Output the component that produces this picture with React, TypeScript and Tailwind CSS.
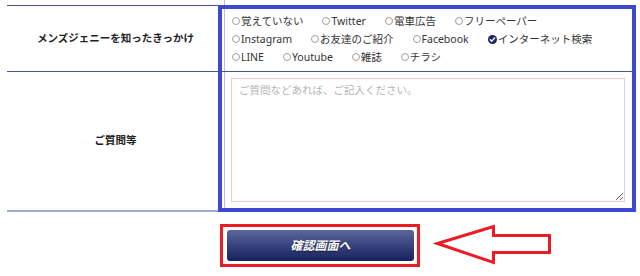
const options = [
  ["覚えていない", "Twitter", "電車広告", "フリーペーパー"],
  ["Instagram", "お友達のご紹介", "Facebook", "インターネット検索"],
  ["LINE", "Youtube", "雑誌", "チラシ"],
];

const checked = "インターネット検索";

function Radio({ on }: { on: boolean }) {
  if (on) {
    return (
      <svg className="w-[9px] h-[9px] mr-[1px] shrink-0" viewBox="0 0 10 10">
        <circle cx="5" cy="5" r="5" fill="#1d2766" />
        <path d="M2.6 5.2l1.6 1.6 3.2-3.4" fill="none" stroke="#fff" strokeWidth={1.6} strokeLinecap="round" strokeLinejoin="round" />
      </svg>
    );
  }
  return <span className="w-[8px] h-[8px] mr-[1px] rounded-full border border-[#a0a0a0] shrink-0" />;
}

export default function App() {
  return (
    <div
      className="relative w-[640px] h-[276px] bg-white overflow-hidden text-[#333]"
      style={{ fontFamily: "'Noto Sans', 'Noto Sans CJK JP', sans-serif" }}
    >
      {/* Table */}
      <div className="ml-[7px] w-[625px]">
        <div className="flex h-[5px]">
          <div className="w-[218px] border-r border-[#b9bdda]" />
        </div>

        {/* Row 1 */}
        <div className="flex h-[67px] border-t border-b border-[#4a5490]">
          <div className="w-[218px] border-r border-[#b9bdda] flex items-center justify-center text-[10.5px] font-bold text-[#222]">
            メンズジェニーを知ったきっかけ
          </div>
          <div className="flex-1 pl-[7px] pt-[6px] text-[10.5px] leading-[18px]">
            {options.map((row, i) => (
              <div key={i} className="flex items-center gap-x-[19px] h-[18px]">
                {row.map((o) => (
                  <label key={o} className="flex items-center whitespace-nowrap">
                    <Radio on={o === checked} />
                    {o}
                  </label>
                ))}
              </div>
            ))}
          </div>
        </div>

        {/* Row 2 */}
        <div className="flex h-[140px] border-b-2 border-[#a3aad1]">
          <div className="w-[218px] border-r border-[#b9bdda] flex items-center justify-center text-[10.5px] font-bold text-[#222]">
            ご質問等
          </div>
          <div className="flex-1 pl-[6px] pt-[6px]">
            <textarea
              className="block w-[394px] h-[124px] border border-[#f3cad4] bg-white px-[7px] py-[3px] text-[10.5px] leading-[16px] outline-none placeholder:text-[#b4b4b4]"
              placeholder="ご質問などあれば、ご記入ください。"
            />
          </div>
        </div>
      </div>

      {/* Submit */}
      <div className="mt-[12px] mx-auto w-[200px] border-[3px] border-[#ed1c24] p-[3px] pl-[4px]">
        <button className="w-full h-[31px] rounded-[3px] bg-gradient-to-b from-[#5d669b] to-[#18215f] text-white text-[12px] font-bold italic [text-shadow:0_1px_1px_rgba(0,0,0,0.5)]">
          確認画面へ
        </button>
      </div>

      {/* Annotations */}
      <div className="absolute left-[218px] top-[5px] w-[418px] h-[207px] border-4 border-[#3e47cf]" />
      <svg className="absolute left-[430px] top-[220px] w-[125px] h-[48px]" viewBox="430 220 125 48">
        <path
          d="M437.5 243.5L493.5 226.5V235.5H549.5V252.5H493.5V262.5Z"
          fill="none"
          stroke="#ed1c24"
          strokeWidth={3}
        />
      </svg>
    </div>
  );
}
